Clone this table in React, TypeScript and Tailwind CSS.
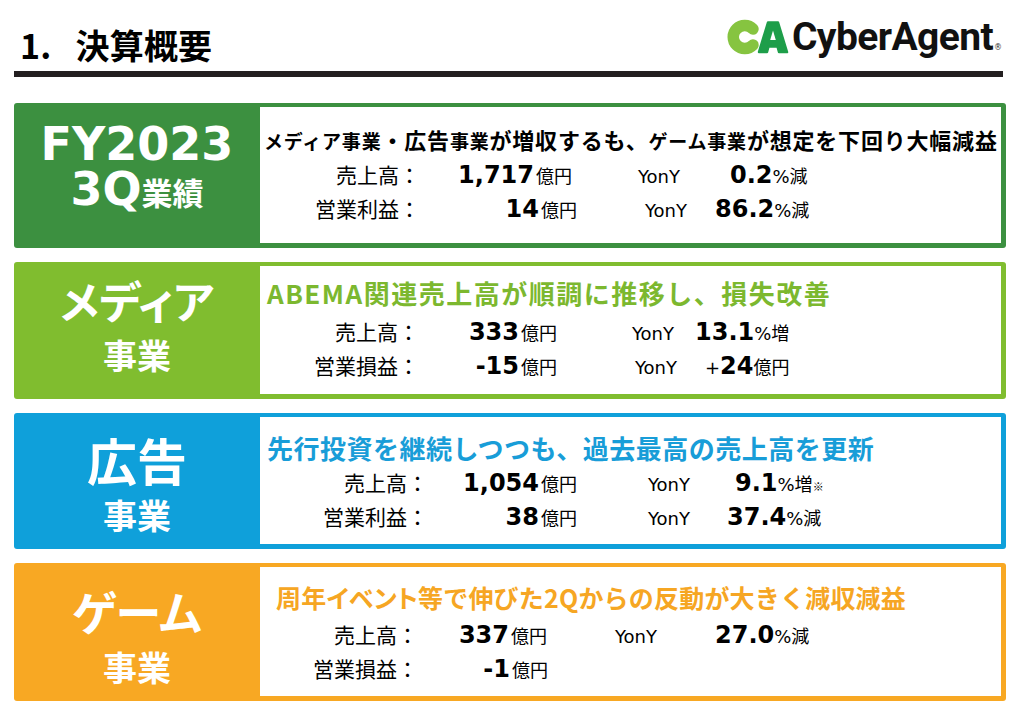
import React from "react";

const JP = "font-['Noto_Sans_CJK_JP',sans-serif]";
const DV = "font-['DejaVu_Sans','Noto_Sans_CJK_JP',sans-serif]";

type RowProps = {
  a: string;
  b: string;
  ml?: string;
  y?: string;
  label: string;
  num: string;
  pct?: React.ReactNode;
};

function Row({ a, b, ml, y, label, num, pct }: RowProps) {
  return (
    <div className="flex h-[34px] items-baseline whitespace-nowrap leading-[34px] text-black">
      <div className={`${a} shrink-0 text-right text-[21px] ${JP}`}>{label}</div>
      <div className={`${b} shrink-0 text-right`}>
        <span className={`${DV} text-[24px] font-bold`}>{num}</span>
        <span className={`${JP} ml-[2px] text-[18px]`}>億円</span>
      </div>
      {y ? (
        <>
          <div className={`${ml} ${y} shrink-0 ${DV} text-[18px]`}>YonY</div>
          <div className={`${DV}`}>{pct}</div>
        </>
      ) : null}
    </div>
  );
}

function Pct({ n, u, note }: { n: string; u: string; note?: boolean }) {
  return (
    <>
      <span className="text-[24px] font-bold">{n}</span>
      <span className="text-[18px]">{u}</span>
      {note ? <span className={`${JP} text-[11px]`}>※</span> : null}
    </>
  );
}

function Box({
  h,
  bg,
  left,
  children,
}: {
  h: string;
  bg: string;
  left: React.ReactNode;
  children: React.ReactNode;
}) {
  return (
    <div className={`flex ${h} ${bg} w-[992px] rounded-[3px]`}>
      <div className="flex w-[246px] shrink-0 flex-col items-center text-white">{left}</div>
      <div className="flex flex-1 pt-[4px] pb-[5px] pr-[5px]">
        <div className="flex flex-1 flex-col bg-white">{children}</div>
      </div>
    </div>
  );
}

function Logo() {
  return (
    <div className="mr-[4px] mt-[13px] flex h-[48px] items-start">
      <svg width="62" height="36" viewBox="0 0 62 36" className="mt-[6px]">
        <path
          d="M26 10 A11.5 11.5 0 1 0 26 26"
          fill="none"
          stroke="#86c440"
          strokeWidth="11.5"
          strokeLinecap="round"
        />
        <path
          d="M32 33 L41 3.5 H51 L60 33 H52 L50.5 27.5 H41.5 L40 33 Z"
          fill="#1e9e4a"
          stroke="#1e9e4a"
          strokeWidth="2.5"
          strokeLinejoin="round"
        />
        <path d="M43.2 21 L46 11.5 L48.8 21 Z" fill="#ffffff" />
      </svg>
      <span className="ml-[3px] font-['Roboto',sans-serif] text-[39px] font-bold leading-[48px] tracking-[-0.6px] text-[#111]">
        CyberAgent
      </span>
      <span className="ml-[1px] mt-[31px] font-['DejaVu_Sans',sans-serif] text-[8px] leading-none text-[#333]">
        ®
      </span>
    </div>
  );
}

export default function App() {
  return (
    <div className="h-[718px] w-[1017px] overflow-hidden bg-white pl-[14px] text-black">
      <header className="flex h-[71px] w-[992px] items-start justify-between">
        <h1 className={`${JP} ml-[6px] mt-[24px] text-[34px] font-bold leading-[42px] tracking-[0.2px] text-black`}>
          1.<span className="ml-[24px]">決算概要</span>
        </h1>
        <Logo />
      </header>
      <div className="h-[6px] w-[989px] bg-[#231f20]" />

      <div className="mt-[26px] flex flex-col gap-[14px]">
        {/* Box 1 */}
        <Box
          h="h-[145px]"
          bg="bg-[#3c9040]"
          left={
            <div className="flex flex-col items-center pt-[19px]">
              <div className={`${DV} h-[45px] text-[46px] font-bold leading-[45px]`}>FY2023</div>
              <div className="flex h-[45px] items-baseline leading-[45px]">
                <span className={`${DV} text-[46px] font-bold`}>3Q</span>
                <span className={`${JP} text-[31px] font-bold`}>業績</span>
              </div>
            </div>
          }
        >
          <div
            className={`${JP} mt-[15px] h-[34px] whitespace-nowrap pl-[4px] text-[22px] font-bold leading-[34px] tracking-[0.8px] text-black`}
          >
            <span className="text-[19px]">メディア事業</span>・広告<span className="text-[19px]">事業</span>
            が増収するも、<span className="text-[19px]">ゲーム事業</span>が想定を下回り大幅減益
          </div>
          <div className="mt-[1px]">
            <Row a="w-[160px]" b="w-[152px]" ml="ml-[66px]" y="w-[92px]" label="売上高：" num="1,717" pct={<Pct n="0.2" u="%減" />} />
            <Row a="w-[160px]" b="w-[157px]" ml="ml-[68px]" y="w-[70px]" label="営業利益：" num="14" pct={<Pct n="86.2" u="%減" />} />
          </div>
        </Box>

        {/* Box 2 */}
        <Box
          h="h-[137px]"
          bg="bg-[#80bd2f]"
          left={
            <div className={`${JP} flex flex-col items-center pt-[13px] font-bold`}>
              <div className="h-[50px] text-[44px] leading-[50px] [font-feature-settings:'palt']">メディア</div>
              <div className="h-[60px] text-[34px] leading-[60px]">事業</div>
            </div>
          }
        >
          <div
            className={`${JP} mt-[10px] h-[34px] whitespace-nowrap pl-[7px] text-[26px] font-bold leading-[34px] tracking-[1.5px] text-[#7cb82f]`}
          >
            ABEMA関連売上高が順調に推移し、損失改善
          </div>
          <div className="mt-[4px]">
            <Row a="w-[159px]" b="w-[138px]" ml="ml-[75px]" y="w-[63px]" label="売上高：" num="333" pct={<Pct n="13.1" u="%増" />} />
            <Row
              a="w-[159px]"
              b="w-[138px]"
              ml="ml-[78px]"
              y="w-[70px]"
              label="営業損益："
              num="-15"
              pct={
                <>
                  <span className="text-[18px]">+</span>
                  <span className="text-[24px] font-bold">24</span>
                  <span className={`${JP} text-[18px]`}>億円</span>
                </>
              }
            />
          </div>
        </Box>

        {/* Box 3 */}
        <Box
          h="h-[136px]"
          bg="bg-[#0fa0da]"
          left={
            <div className={`${JP} flex flex-col items-center pt-[18px] font-bold`}>
              <div className="h-[56px] text-[50px] leading-[56px]">広告</div>
              <div className="h-[56px] text-[34px] leading-[56px]">事業</div>
            </div>
          }
        >
          <div
            className={`${JP} mt-[14px] h-[34px] whitespace-nowrap pl-[7px] text-[26px] font-bold leading-[34px] tracking-[0.5px] text-[#189dd8]`}
          >
            先行投資を継続しつつも、過去最高の売上高を更新
          </div>
          <div>
            <Row a="w-[168px]" b="w-[149px]" ml="ml-[71px]" y="w-[87px]" label="売上高：" num="1,054" pct={<Pct n="9.1" u="%増" note />} />
            <Row a="w-[168px]" b="w-[149px]" ml="ml-[71px]" y="w-[79px]" label="営業利益：" num="38" pct={<Pct n="37.4" u="%減" />} />
          </div>
        </Box>

        {/* Box 4 */}
        <Box
          h="h-[138px]"
          bg="bg-[#f8a823]"
          left={
            <div className={`${JP} flex flex-col items-center pt-[19px] font-bold`}>
              <div className="h-[56px] text-[46px] leading-[56px] [font-feature-settings:'palt']">ゲーム</div>
              <div className="h-[58px] text-[34px] leading-[58px]">事業</div>
            </div>
          }
        >
          <div
            className={`${JP} mt-[13px] h-[34px] whitespace-nowrap pl-[16px] text-[25px] font-bold leading-[34px] tracking-[0.2px] text-[#f6a623]`}
          >
            周年<span className="[font-feature-settings:'palt']">イベント</span>等で伸びた2Qからの反動が大きく減収減益
          </div>
          <div className="mt-[3px]">
            <Row a="w-[158px]" b="w-[129px]" ml="ml-[68px]" y="w-[100px]" label="売上高：" num="337" pct={<Pct n="27.0" u="%減" />} />
            <Row a="w-[158px]" b="w-[130px]" label="営業損益：" num="-1" />
          </div>
        </Box>
      </div>
    </div>
  );
}
